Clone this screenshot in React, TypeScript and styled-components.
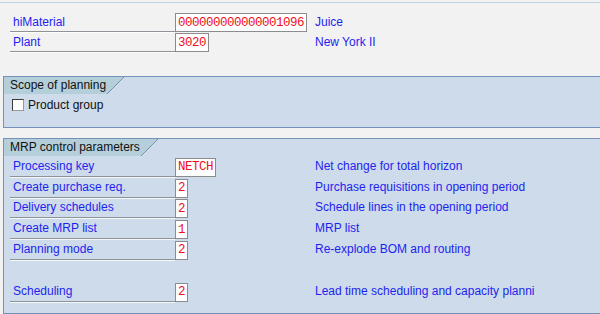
import React from "react";
import styled, { createGlobalStyle } from "styled-components";

const Global = createGlobalStyle`
  html, body { margin: 0; padding: 0; }
  body {
    background: #f2f2f2;
    font-family: "Liberation Sans", Arial, sans-serif;
    font-size: 12px;
  }
`;

const Page = styled.div`
  width: 600px;
  height: 314px;
  overflow: hidden;
  background: #f2f2f2;
`;

const TopLine = styled.div`
  margin-top: 2px;
  height: 1px;
  background: #bed3e5;
`;

const Header = styled.div`
  margin-top: 10px;
  padding-left: 10px;
  display: flex;
  flex-direction: column;
  gap: 1px;
`;

const Row = styled.div<{ $h: number }>`
  display: grid;
  grid-template-columns: 165px 140px 1fr;
  height: ${(p) => p.$h}px;
  align-items: end;
`;

const Label = styled.div`
  height: 100%;
  box-sizing: border-box;
  border-bottom: 1px solid #8f9399;
  box-shadow: 0 1px 0 rgba(255, 255, 255, 0.8);
  padding-left: 3px;
  display: flex;
  align-items: center;
  color: #1f1ff0;
  white-space: nowrap;
`;

const Field = styled.div`
  justify-self: start;
  height: 19px;
  box-sizing: border-box;
  border: 1px solid #8c8c8c;
  background: #fff;
  color: #f0101a;
  font-family: "Liberation Mono", "Courier New", monospace;
  font-size: 12.5px;
  letter-spacing: -0.5px;
  padding: 0 2px 0 2px;
  display: flex;
  align-items: center;
  white-space: nowrap;
`;

const Desc = styled.div`
  align-self: stretch;
  display: flex;
  align-items: center;
  color: #1f1ff0;
  white-space: nowrap;
  padding-bottom: 1px;
`;

const Group = styled.div<{ $top: number; $h: number }>`
  margin-top: ${(p) => p.$top}px;
  margin-left: 3px;
  height: ${(p) => p.$h}px;
  box-sizing: border-box;
  border: 1px solid #7391b9;
  border-right: none;
  background: #cddbea;
`;

const Tab = styled.div`
  display: flex;
  height: 17px;
`;

const TabLabel = styled.div`
  background: #b4cfda;
  padding: 0 1px 0 6px;
  line-height: 17px;
  color: #111;
  white-space: nowrap;
`;

const CheckRow = styled.label`
  display: flex;
  align-items: center;
  gap: 4px;
  margin-top: 4px;
  padding-left: 8px;
  color: #111;
`;

const CheckBox = styled.span`
  width: 12px;
  height: 12px;
  box-sizing: border-box;
  border: 1px solid #3a3a3a;
  border-right-color: #9a9a9a;
  border-bottom-color: #9a9a9a;
  background: #fff;
`;

const Rows = styled.div`
  padding-left: 6px;
  display: flex;
  flex-direction: column;
`;

const Spacer = styled.div`
  height: 20.8px;
`;

const Slant = () => (
  <svg width="17" height="17" viewBox="0 0 17 17">
    <polygon points="0,0 17,0 0,17" fill="#b4cfda" />
    <line x1="17" y1="0" x2="0" y2="17" stroke="#7391b9" strokeWidth="1" />
  </svg>
);

const GroupTitle = ({ text }: { text: string }) => (
  <Tab>
    <TabLabel>{text}</TabLabel>
    <Slant />
  </Tab>
);

const mrp: [string, string, string][] = [
  ["Processing key", "NETCH", "Net change for total horizon"],
  ["Create purchase req.", "2", "Purchase requisitions in opening period"],
  ["Delivery schedules", "2", "Schedule lines in the opening period"],
  ["Create MRP list", "1", "MRP list"],
  ["Planning mode", "2", "Re-explode BOM and routing"],
];

export default function App() {
  return (
    <Page>
      <Global />
      <TopLine />
      <Header>
        <Row $h={19}>
          <Label>hiMaterial</Label>
          <Field>000000000000001096</Field>
          <Desc>Juice</Desc>
        </Row>
        <Row $h={19}>
          <Label>Plant</Label>
          <Field>3020</Field>
          <Desc>New York II</Desc>
        </Row>
      </Header>
      <Group $top={24} $h={52}>
        <GroupTitle text="Scope of planning" />
        <CheckRow>
          <CheckBox />
          Product group
        </CheckRow>
      </Group>
      <Group $top={10} $h={176}>
        <GroupTitle text="MRP control parameters" />
        <Rows>
          {mrp.map(([l, v, d]) => (
            <Row $h={20.8} key={l}>
              <Label>{l}</Label>
              <Field>{v}</Field>
              <Desc>{d}</Desc>
            </Row>
          ))}
          <Spacer />
          <Row $h={20.8}>
            <Label>Scheduling</Label>
            <Field>2</Field>
            <Desc>Lead time scheduling and capacity planni</Desc>
          </Row>
        </Rows>
      </Group>
    </Page>
  );
}
